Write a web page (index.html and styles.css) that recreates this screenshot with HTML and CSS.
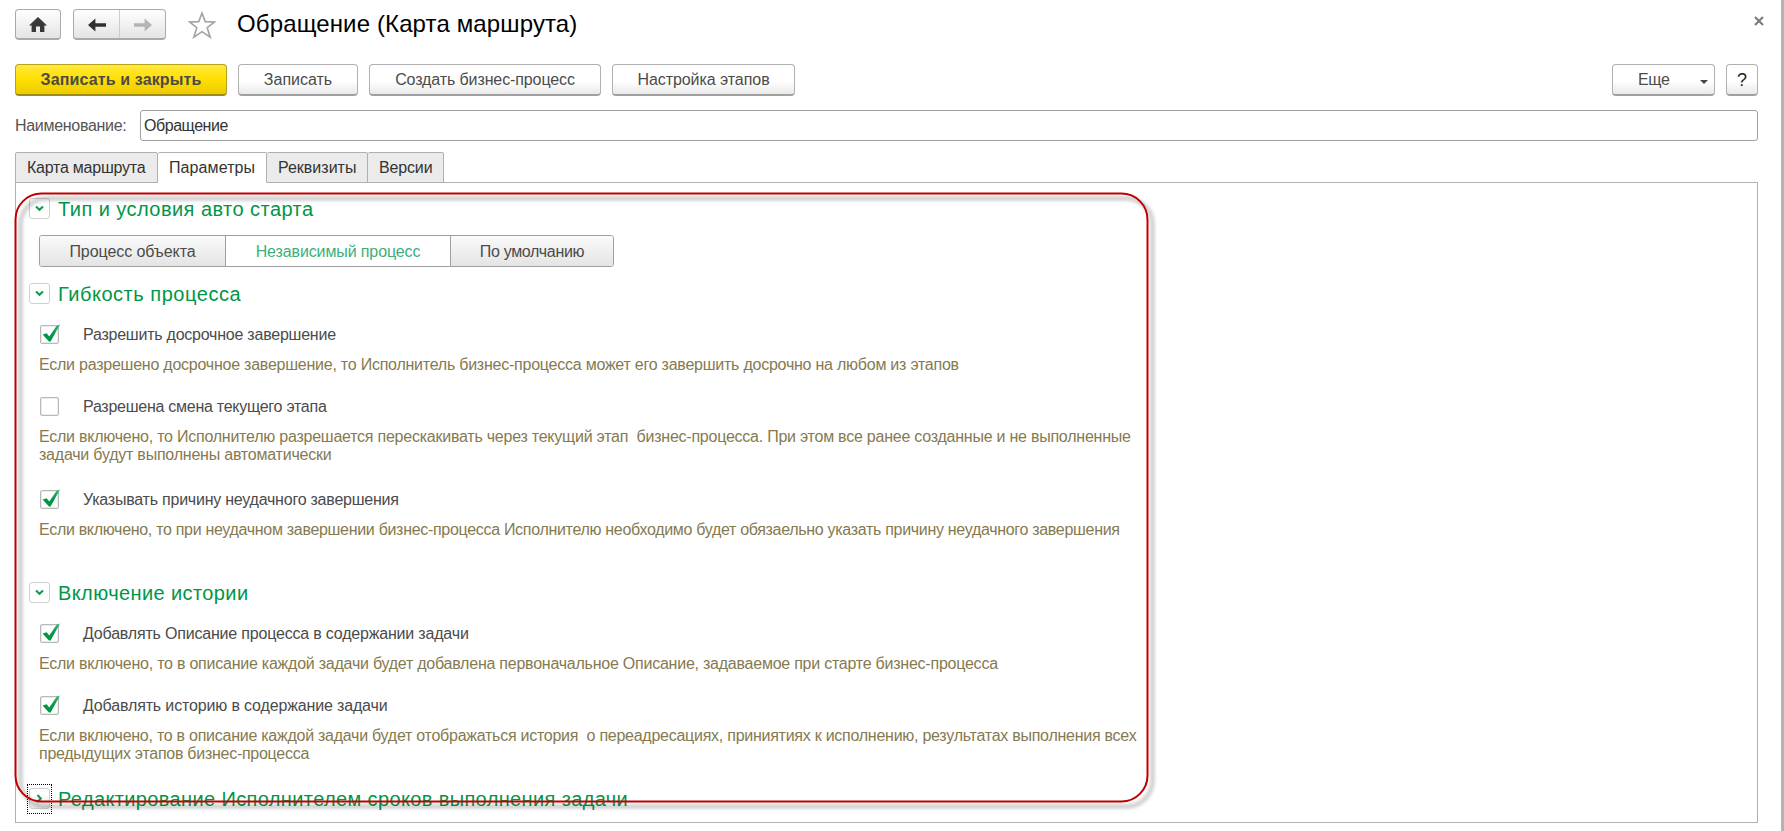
FILE: index.html
```html
<!DOCTYPE html>
<html lang="ru">
<head>
<meta charset="utf-8">
<title>Обращение (Карта маршрута)</title>
<link rel="stylesheet" href="styles.css">
</head>
<body>
<svg class="defs" width="0" height="0">
  <defs>
    <linearGradient id="tick" x1="0" y1="0" x2="0" y2="1"><stop offset="0" stop-color="#35b878"/><stop offset=".6" stop-color="#009646"/></linearGradient>
    <symbol id="check" viewBox="0 0 20 20"><path d="M2.6 10.4 L6.6 9.2 L9.3 12.4 L16.6 1.8 L20 .4 L10.6 17.4 H8.9 Z" fill="url(#tick)"/></symbol>
    <symbol id="chev" viewBox="0 0 9 9"><path d="M1 2.5 L4.5 5.8 L8 2.5" fill="none" stroke="#0b9a4d" stroke-width="2"/></symbol>
  </defs>
</svg>
<div class="window">
  <header class="titlebar">
    <button class="btn home"><svg width="18" height="15" viewBox="0 0 18 15"><path d="M9 0 L18 8.4 H15.4 V15 H11 V9.6 H7 V15 H2.6 V8.4 H0 Z" fill="#383838"/></svg></button>
    <div class="btn nav">
      <span class="nav-item"><svg width="18" height="14" viewBox="0 0 18 14"><path d="M0 7 L7.4 .4 V5.2 H18 V8.8 H7.4 V13.6 Z" fill="#303030"/></svg></span>
      <span class="nav-item"><svg width="18" height="14" viewBox="0 0 18 14"><path d="M18 7 L10.6 .4 V5.2 H0 V8.8 H10.6 V13.6 Z" fill="#b4b4b4"/></svg></span>
    </div>
    <svg class="star" width="28" height="28" viewBox="0 0 28 28"><path d="M14 2 L17.2 10.6 L26.4 10.9 L19.2 16.7 L22.2 26.2 L14 20.6 L5.8 26.2 L8.8 16.7 L1.6 10.9 L10.8 10.6 Z" fill="#fff" stroke="#a2a2a2" stroke-width="1.6"/></svg>
    <h1 class="title">Обращение (Карта маршрута)</h1>
    <svg class="close" width="10" height="10" viewBox="0 0 10 10"><path d="M1 1 L9 9 M9 1 L1 9" stroke="#7b7b7b" stroke-width="2.1"/></svg>
  </header>

  <div class="toolbar">
    <button class="btn primary w-save-close">Записать и закрыть</button>
    <button class="btn w-save">Записать</button>
    <button class="btn w-create">Создать бизнес-процесс</button>
    <button class="btn w-stages">Настройка этапов</button>
    <button class="btn more"><span>Еще</span><i class="caret"></i></button>
    <button class="btn help">?</button>
  </div>

  <div class="field">
    <label class="field-label">Наименование:</label>
    <div class="input">Обращение</div>
  </div>

  <nav class="tabs">
    <span class="tab t1">Карта маршрута</span>
    <span class="tab t2 active">Параметры</span>
    <span class="tab t3">Реквизиты</span>
    <span class="tab t4">Версии</span>
  </nav>

  <main class="panel">
    <div class="heading"><span class="toggle"><svg width="9" height="9"><use href="#chev"/></svg></span><h2 class="h-type">Тип и условия авто старта</h2></div>
    <div class="segments">
      <span class="seg s1">Процесс объекта</span><span class="seg s2 on">Независимый процесс</span><span class="seg s3">По умолчанию</span>
    </div>

    <div class="heading flex-head"><span class="toggle"><svg width="9" height="9"><use href="#chev"/></svg></span><h2 class="h-flex">Гибкость процесса</h2></div>
    <section class="option first">
      <div class="check-row"><span class="box"><svg class="tick" width="20" height="20"><use href="#check"/></svg></span><span class="label l1">Разрешить досрочное завершение</span></div>
      <p class="hint"><span class="n1">Если разрешено досрочное завершение, то Исполнитель бизнес-процесса может его завершить досрочно на любом из этапов</span></p>
    </section>
    <section class="option">
      <div class="check-row"><span class="box"></span><span class="label l2">Разрешена смена текущего этапа</span></div>
      <p class="hint"><span class="n2">Если включено, то Исполнителю разрешается перескакивать через текущий этап&nbsp; бизнес-процесса. При этом все ранее созданные и не выполненные</span><br><span class="n3">задачи будут выполнены автоматически</span></p>
    </section>
    <section class="option spaced">
      <div class="check-row"><span class="box"><svg class="tick" width="20" height="20"><use href="#check"/></svg></span><span class="label l3">Указывать причину неудачного завершения</span></div>
      <p class="hint"><span class="n4">Если включено, то при неудачном завершении бизнес-процесса Исполнителю необходимо будет обязаельно указать причину неудачного завершения</span></p>
    </section>

    <div class="heading history-head"><span class="toggle"><svg width="9" height="9"><use href="#chev"/></svg></span><h2 class="h-hist">Включение истории</h2></div>
    <section class="option first">
      <div class="check-row"><span class="box"><svg class="tick" width="20" height="20"><use href="#check"/></svg></span><span class="label l4">Добавлять Описание процесса в содержании задачи</span></div>
      <p class="hint"><span class="n5">Если включено, то в описание каждой задачи будет добавлена первоначальное Описание, задаваемое при старте бизнес-процесса</span></p>
    </section>
    <section class="option">
      <div class="check-row"><span class="box"><svg class="tick" width="20" height="20"><use href="#check"/></svg></span><span class="label l5">Добавлять историю в содержание задачи</span></div>
      <p class="hint"><span class="n6">Если включено, то в описание каждой задачи будет отображаться история&nbsp; о переадресациях, приниятиях к исполнению, результатах выполнения всех</span><br><span class="n7">предыдущих этапов бизнес-процесса</span></p>
    </section>

    <div class="heading edit-head"><span class="toggle focused"><svg class="right" width="9" height="9"><use href="#chev"/></svg></span><h2 class="h-edit">Редактирование Исполнителем сроков выполнения задачи</h2></div>
  </main>
</div>
<svg class="callout" width="1160" height="640" viewBox="0 0 1160 640">
  <defs><filter id="shade" x="-5%" y="-5%" width="110%" height="110%"><feGaussianBlur stdDeviation="1.5"/></filter></defs>
  <rect x="10.5" y="13.5" width="1132" height="608" rx="26" fill="none" stroke="#000" stroke-opacity=".17" stroke-width="5" filter="url(#shade)"/>
  <rect x="5.5" y="8.5" width="1132" height="608" rx="26" fill="none" stroke="#c00000" stroke-width="2"/>
</svg>
</body>
</html>
```
FILE: styles.css
```css
* { box-sizing: border-box; }
body {
  margin: 0;
  width: 1784px;
  height: 831px;
  overflow: hidden;
  position: relative;
  background: #fff;
  color: #4b4b4b;
  font: 16px/18px "Liberation Sans", Arial, sans-serif;
}
.defs { position: absolute; }
.window {
  height: 831px;
  padding: 9px 23px 0 15px;
  border-right: 3px solid #b3b3b3;
}
.btn {
  display: flex;
  align-items: center;
  justify-content: center;
  height: 32px;
  padding: 1px 0 0;
  border: 1px solid #b0b0b0;
  border-bottom: 2px solid #a0a0a0;
  border-radius: 4px;
  background: linear-gradient(#fff 55%, #e9e9e9);
  color: #4b4b4b;
  font: inherit;
  white-space: nowrap;
}
.titlebar { display: flex; height: 55px; }
.home, .nav {
  height: 31px;
  padding: 0;
  border: 1px solid #aaa;
  border-bottom-width: 2px;
  background: linear-gradient(#fff, #e4e4e4);
}
.home { width: 46px; margin-right: 12px; }
.nav { width: 93px; margin-right: 22px; }
.nav-item { flex: 1; display: flex; justify-content: center; align-items: center; height: 28px; padding-top: 1px; }
.nav-item + .nav-item { border-left: 1px solid #ccc; }
.star { margin: 2px 21px 0 0; }
.title {
  margin: 0;
  color: #000;
  font-size: 24px;
  font-weight: 400;
  line-height: 30px;
  letter-spacing: .13px;
}
.close { margin: 7px -6px 0 auto; }

.toolbar { display: flex; gap: 11px; }
.primary {
  border-color: #b5a21e;
  border-bottom-color: #a08c10;
  background: linear-gradient(#ffe93c, #ffdf00 50%, #eccb00);
  font-weight: 700;
}
.w-save-close { width: 212px; letter-spacing: .13px; }
.w-save { width: 120px; }
.w-create { width: 232px; letter-spacing: -.11px; }
.w-stages { width: 183px; letter-spacing: -.06px; }
.more { width: 103px; margin-left: auto; padding-left: 25px; justify-content: flex-start; letter-spacing: -.3px; }
.caret { margin: 3px 0 0 30px; border: 4px solid transparent; border-top-color: #444; border-bottom: 0; }
.help { width: 32px; font-size: 18px; color: #222; }

.field { display: flex; align-items: center; margin-top: 14px; }
.field-label { width: 125px; color: #555; letter-spacing: -.3px; }
.input {
  flex: 1;
  height: 31px;
  padding: 6px 3px;
  border: 1px solid #a0a0a0;
  border-radius: 3px;
  color: #333;
  letter-spacing: -.45px;
}

.tabs { display: flex; margin-top: 11px; height: 31px; position: relative; }
.tab {
  height: 31px;
  padding: 6px 0 0 11px;
  border: 1px solid #b0b0b0;
  border-left: 0;
  border-radius: 2px 2px 0 0;
  background: #ebebeb;
  color: #333;
}
.t1 { width: 143px; border-left: 1px solid #b0b0b0; letter-spacing: -.24px; }
.t2 { width: 109px; letter-spacing: .1px; }
.t3 { width: 101px; }
.t4 { width: 76px; letter-spacing: -.15px; }
.active { background: #fff; border-bottom-color: #fff; }

.panel {
  height: 641px;
  margin-top: -1px;
  padding: 15px 0 0 13px;
  border: 1px solid #b0b0b0;
}
.heading { display: flex; align-items: center; height: 21px; }
.heading h2 {
  margin: 0;
  color: #009646;
  font-size: 20px;
  font-weight: 400;
  line-height: 22px;
  white-space: nowrap;
}
.heading .h-type { letter-spacing: .45px; }
.heading .h-flex { letter-spacing: .53px; }
.heading .h-hist { letter-spacing: .4px; }
.heading .h-edit { letter-spacing: .37px; }
.toggle {
  display: flex;
  align-items: center;
  justify-content: center;
  width: 21px;
  height: 21px;
  margin-right: 8px;
  border: 1px solid #cfcfcf;
  border-radius: 3px;
  background: #fff;
}
.right { transform: rotate(-90deg); }
.focused { position: relative; background: linear-gradient(#fff 30%, #e6e6e6); }
.focused::after {
  content: "";
  position: absolute;
  inset: -5px -3px -6px;
  border: 1px dotted #000;
}

.segments {
  display: flex;
  width: 575px;
  height: 32px;
  margin: 16px 0 0 10px;
  border: 1px solid #a0a0a0;
  border-radius: 3px;
  overflow: hidden;
}
.seg { line-height: 32px; text-align: center; background: linear-gradient(#fafafa, #e4e4e4); }
.seg + .seg { border-left: 1px solid #a0a0a0; }
.s1 { width: 185px; letter-spacing: -.08px; }
.s2 { width: 225px; letter-spacing: -.12px; }
.s3 { flex: 1; letter-spacing: -.3px; }
.on { background: #fff; color: #3caf78; }

.flex-head { margin-top: 16px; }
.option { margin: 23px 0 0 10px; }
.option.first { margin-top: 21px; }
.option.spaced { margin-top: 26px; }
.check-row { display: flex; height: 19px; padding-left: 1px; }
.label { padding-top: 1px; }
.box {
  width: 19px;
  height: 19px;
  margin-right: 24px;
  border: 1px solid #b8b8b8;
  border-radius: 2px;
  box-shadow: inset 0 0 0 1px #ececec;
}
.tick { display: block; margin: -2px 0 0 -1px; }
.hint { margin: 12px 0 0; color: #857a50; white-space: nowrap; }
.history-head { margin-top: 43px; }
.edit-head { margin-top: 25px; }

/* Tracking per line */
.l1, .l3 { letter-spacing: -.23px; }
.l2 { letter-spacing: -.26px; }
.l4 { letter-spacing: -.19px; }
.l5 { letter-spacing: -.15px; }
.n1, .n2, .n5 { letter-spacing: -.237px; }
.n3 { letter-spacing: -.22px; }
.n4 { letter-spacing: -.307px; }
.n6 { letter-spacing: -.257px; }
.n7 { letter-spacing: -.27px; }

.callout { position: absolute; left: 10px; top: 185px; pointer-events: none; }
```
